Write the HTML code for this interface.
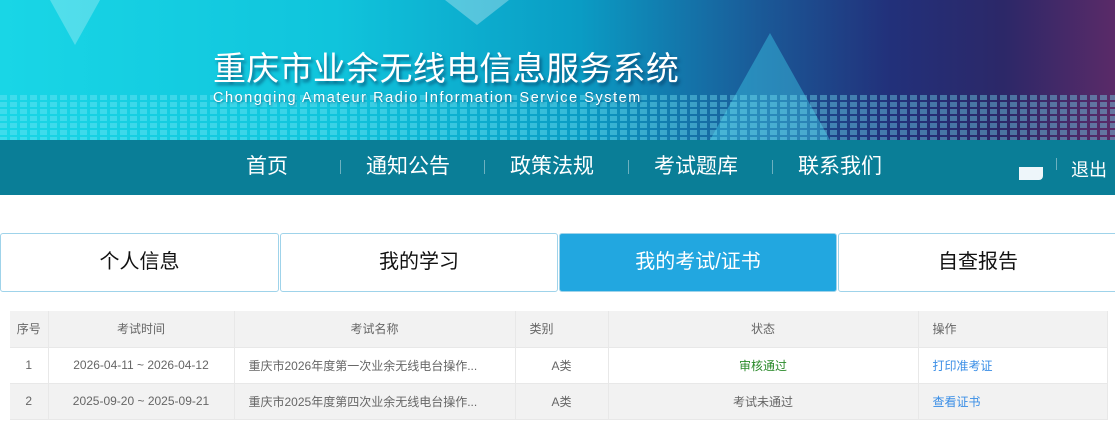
<!DOCTYPE html>
<html><head><meta charset="utf-8"><style>
*{margin:0;padding:0;box-sizing:border-box}
body{width:1115px;height:428px;overflow:hidden;background:#fff;font-family:"Liberation Sans","Noto Sans CJK SC",sans-serif;position:relative}
.hd{position:absolute;left:0;top:0;width:1115px;height:140px;background:linear-gradient(90deg,#19d6e6 0%,#10c4dc 30%,#0a9cc4 52%,#1a5a98 68%,#22307a 80%,#2c2868 90%,#5a2a68 100%);overflow:hidden}
.bars{position:absolute;left:0;top:95px;width:1115px;height:45px;background:repeating-linear-gradient(90deg,rgba(120,230,245,.5) 0 7px,transparent 7px 10px);-webkit-mask:repeating-linear-gradient(180deg,#000 0 5px,transparent 5px 7px);opacity:.8}
.tri{position:absolute;width:0;height:0}
.t1{position:absolute;left:213px;top:42px;font-size:33px;letter-spacing:.3px;color:#fff;text-shadow:2px 3px 3px rgba(0,40,80,.6)}
.t2{position:absolute;left:213px;top:90px;font-size:14.5px;letter-spacing:1.55px;color:#fff;text-shadow:1px 1px 2px rgba(0,40,80,.5)}
.nav{position:absolute;left:0;top:140px;width:1115px;height:55px;background:#0a7e97}
.nav span{position:absolute;top:10px;font-size:21px;color:#fff}
.sep{position:absolute;top:20px;width:1px;height:14px;background:rgba(255,255,255,.4)}
.tab{position:absolute;top:233px;height:59px;border:1px solid #9fd3ea;border-radius:3px;font-size:20px;color:#111;text-align:center;line-height:57px;background:#fff}
.tab.on{background:#22a7e0;color:#fff}
table{position:absolute;left:10px;top:311px;width:1098px;border-collapse:collapse;font-size:12px;color:#666}
td{height:36px;text-align:center;border-right:1px solid #e8e8e8;border-bottom:1px solid #e8e8e8}
tr.h td,tr.g td{background:#f2f2f2}
.l{text-align:left;padding-left:14px}
</style></head><body>
<div class="hd">
<div class="tri" style="left:50px;top:0;border-left:25px solid transparent;border-right:25px solid transparent;border-top:45px solid rgba(255,255,255,.25)"></div>
<div class="tri" style="left:445px;top:0;border-left:32px solid transparent;border-right:32px solid transparent;border-top:25px solid rgba(255,255,255,.3)"></div>
<div class="tri" style="left:710px;top:33px;border-left:60px solid transparent;border-right:60px solid transparent;border-bottom:107px solid rgba(60,200,230,.45)"></div>
<div class="bars"></div>
<div class="t1">重庆市业余无线电信息服务系统</div>
<div class="t2">Chongqing Amateur Radio Information Service System</div>
</div>
<div class="nav">
<span style="left:246px">首页</span><div class="sep" style="left:340px"></div>
<span style="left:366px">通知公告</span><div class="sep" style="left:484px"></div>
<span style="left:510px">政策法规</span><div class="sep" style="left:628px"></div>
<span style="left:654px">考试题库</span><div class="sep" style="left:772px"></div>
<span style="left:798px">联系我们</span>
<div style="position:absolute;left:1019px;top:27px;width:24px;height:13px;background:#eef6fa;border-radius:0 0 4px 0"></div>
<div class="sep" style="left:1056px;top:18px;height:12px"></div>
<span style="left:1071px;top:16px;font-size:18px">退出</span>
</div>
<div class="tab" style="left:0;width:279px">个人信息</div>
<div class="tab" style="left:280px;width:278px">我的学习</div>
<div class="tab on" style="left:559px;width:278px">我的考试/证书</div>
<div class="tab" style="left:838px;width:280px">自查报告</div>
<table>
<colgroup><col style="width:38px"><col style="width:186px"><col style="width:281px"><col style="width:93px"><col style="width:310px"><col></colgroup>
<tr class="h"><td>序号</td><td>考试时间</td><td>考试名称</td><td class="l">类别</td><td>状态</td><td class="l">操作</td></tr>
<tr><td>1</td><td>2026-04-11 ~ 2026-04-12</td><td class="l">重庆市2026年度第一次业余无线电台操作...</td><td>A类</td><td style="color:#2a8a2a">审核通过</td><td class="l" style="color:#3a8ee6">打印准考证</td></tr>
<tr class="g"><td>2</td><td>2025-09-20 ~ 2025-09-21</td><td class="l">重庆市2025年度第四次业余无线电台操作...</td><td>A类</td><td>考试未通过</td><td class="l" style="color:#3a8ee6">查看证书</td></tr>
</table>
</body></html>
